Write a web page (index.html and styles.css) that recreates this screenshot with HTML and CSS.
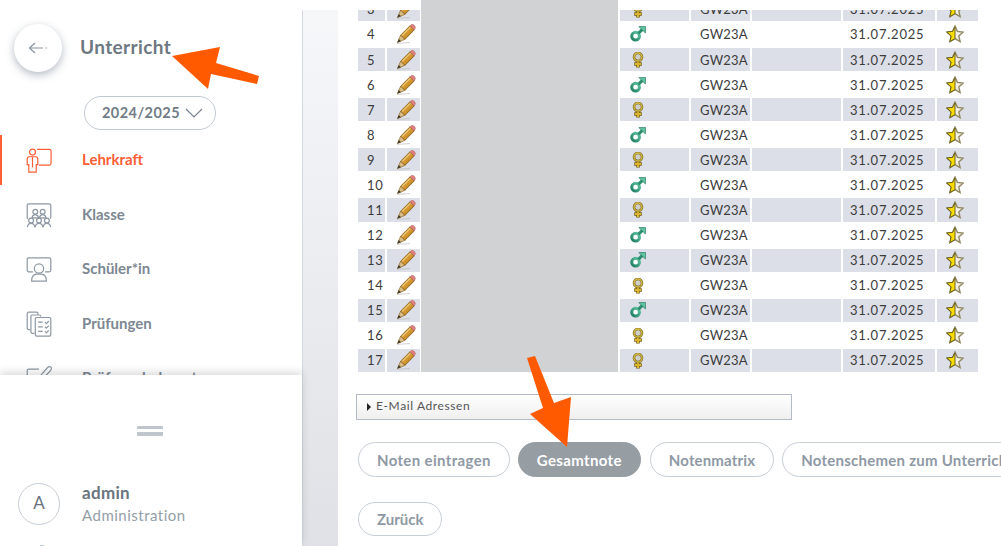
FILE: index.html
```html
<!DOCTYPE html>
<html lang="de">
<head>
    <meta charset="UTF-8">
    <title>Unterricht</title>
    <link rel="stylesheet" href="styles.css">
</head>
<body>
    <svg class="defs" width="0" height="0">
        <defs>
            <linearGradient id="g-pencil" x1="0" y1="0" x2="1" y2="1">
                <stop offset="0" stop-color="#f0c465"/>
                <stop offset=".55" stop-color="#d2952c"/>
                <stop offset="1" stop-color="#8f6318"/>
            </linearGradient>
            <linearGradient id="g-male" x1="1" y1="0" x2="0" y2="1">
                <stop offset="0" stop-color="#63c9a4"/>
                <stop offset="1" stop-color="#1d7a60"/>
            </linearGradient>
        </defs>
        <symbol id="i-pencil" viewBox="0 0 20 20">
            <path d="M1 19.3 L14 18.6" stroke="#b5b5b5" stroke-width="1" opacity=".6"/>
            <path d="M4.6 11.2 L14 1.8 L18.2 6 L8.8 15.4 Z" fill="url(#g-pencil)" stroke="#7d5715" stroke-width=".8"/>
            <path d="M6.2 11.4 L14.6 3" stroke="#f8dd98" stroke-width="1"/>
            <path d="M14 1.8 L15.4 .6 Q16.6 0 17.6 .8 L19 2.2 Q19.8 3.4 19 4.6 L18.2 6 Z" fill="#e2807e" stroke="#a85f5c" stroke-width=".5"/>
            <path d="M4.6 11.2 L8.8 15.4 L1.4 18.6 Z" fill="#d9bd85" stroke="#7d5715" stroke-width=".6"/>
            <path d="M2.8 15 L5 17.2 L1.4 18.6 Z" fill="#3c3628"/>
        </symbol>
        <symbol id="i-male" viewBox="0 0 16 16">
            <circle cx="5.6" cy="10.2" r="3.9" fill="#fff" stroke="url(#g-male)" stroke-width="3"/>
            <path d="M8.4 7.4 L12.4 3.4" stroke="#2c8d70" stroke-width="3"/>
            <path d="M8.8 .6 L15.6 .4 L15.4 7 Z" fill="#5ec4a0" stroke="#1f6b55" stroke-width=".6"/>
        </symbol>
        <symbol id="i-female" viewBox="0 0 12 16">
            <path d="M6 8 V15.4 M2.2 12 H9.8" stroke="#6f5d16" stroke-width="3.6"/>
            <path d="M6 8 V15 M2.8 12 H9.2" stroke="#dcb52c" stroke-width="2.2"/>
            <circle cx="6" cy="5" r="4" fill="#cfcfc6" stroke="#7c6c22" stroke-width="2.6"/>
            <circle cx="6" cy="5" r="4" fill="none" stroke="#d9bb45" stroke-width="1.3"/>
        </symbol>
        <symbol id="i-star" viewBox="0 0 18 18">
            <path d="M9 1 L11.4 6.4 L17.2 7 L12.8 10.9 L14.1 16.6 L9 13.6 L3.9 16.6 L5.2 10.9 L.8 7 L6.6 6.4 Z" fill="#f1efe6" stroke="#928862" stroke-width="1.4"/>
            <path d="M9 2 V13.6 L3.9 16.6 L5.2 10.9 L.8 7 L6.6 6.4 Z" fill="#fbdc00" stroke="#5f571a" stroke-width=".9"/>
        </symbol>
    </svg>

    <aside class="sidebar">
        <div class="sidebar-scroll">
            <header class="sidebar-head">
                <button class="back-btn">
                    <svg width="20" height="12" viewBox="0 0 20 12"><path d="M7 1 L1.5 6 L7 11 M1.5 6 H15 M17.5 6 H19" fill="none" stroke="#8a94a0" stroke-width="1.2"/></svg>
                </button>
                <h1>Unterricht</h1>
            </header>
            <div class="year-select">
                <span>2024/2025</span>
                <svg width="18" height="10" viewBox="0 0 18 10"><path d="M1 1 L9 9 L17 1" fill="none" stroke="#7d8792" stroke-width="1.2"/></svg>
            </div>
            <nav class="nav">
                <a class="nav-item active">
                    <svg class="nav-icon" viewBox="0 0 28 28">
                        <circle cx="7" cy="5.5" r="3.2"/>
                        <path d="M3.5 10.5 H10.5 Q12.7 10.5 12.7 13 V19 H11 V27 H3 V19 H1.3 V13 Q1.3 10.5 3.5 10.5 Z M7 10.5 V22"/>
                        <path d="M12 2.5 H25 Q27 2.5 27 4.5 V17.5 Q27 19.5 25 19.5 H14"/>
                    </svg>
                    <span>Lehrkraft</span>
                </a>
                <a class="nav-item">
                    <svg class="nav-icon" viewBox="0 0 28 28">
                        <path d="M2 18 Q1.3 18 1.3 16 V3.5 Q1.3 2 3 2 H25 Q26.7 2 26.7 3.5 V16 Q26.7 18 26 18"/>
                        <circle cx="10" cy="10.5" r="2.6"/><circle cx="18" cy="10.5" r="2.6"/>
                        <path d="M6.5 17 Q7 13.6 10 13.6 T13.5 17 H6.5 Z M14.5 17 Q15 13.6 18 13.6 T21.5 17 H14.5 Z"/>
                        <circle cx="5.5" cy="20" r="2.6"/><circle cx="14" cy="20" r="2.6"/><circle cx="22.5" cy="20" r="2.6"/>
                        <path d="M1.5 27 Q2 23 5.5 23 T9.5 27 M10 27 Q10.5 23 14 23 T18 27 M18.5 27 Q19 23 22.5 23 T26.5 27"/>
                    </svg>
                    <span>Klasse</span>
                </a>
                <a class="nav-item">
                    <svg class="nav-icon" viewBox="0 0 28 28">
                        <path d="M7.5 17 H3 Q1.3 17 1.3 15 V3.5 Q1.3 2 3 2 H25 Q26.7 2 26.7 3.5 V15 Q26.7 17 25 17 H20.5"/>
                        <circle cx="14" cy="13.5" r="5"/>
                        <path d="M6 27 Q6 20.5 11 19.5 H17 Q22 20.5 22 27 Z"/>
                    </svg>
                    <span>Schüler*in</span>
                </a>
                <a class="nav-item">
                    <svg class="nav-icon" viewBox="0 0 28 28">
                        <path d="M4.5 20 H3 Q1.3 20 1.3 18 V3 Q1.3 1.3 3 1.3 H11 Q13 1.3 13 3 V4"/>
                        <path d="M9 24 H7 Q5.3 24 5.3 22 V6 Q5.3 4.3 7 4.3 H14 Q16 4.3 16 6"/>
                        <rect x="10" y="7" width="16.7" height="20" rx="1.5"/>
                        <path d="M13 12 H18 M13 17 H18 M13 22 H18 M20.5 12 L22 13.5 L24.5 10.8 M20.5 17 L22 18.5 L24.5 15.8 M20.5 22 L22 23.5 L24.5 20.8"/>
                    </svg>
                    <span>Prüfungen</span>
                </a>
                <a class="nav-item">
                    <svg class="nav-icon" viewBox="0 0 28 28">
                        <path d="M14 4.5 H3 Q1.3 4.5 1.3 6 V25 Q1.3 27 3 27 H22 Q24 27 24 25 V14"/>
                        <path d="M10 18 L23 3 Q25 1 27 2.5 Q28 4.5 26 6.5 L13 20 Z"/>
                    </svg>
                    <span>Prüfungsbelegart</span>
                </a>
            </nav>
        </div>
        <div class="user-panel">
            <div class="handle"></div>
            <div class="user">
                <div class="avatar">A</div>
                <div>
                    <div class="user-name">admin</div>
                    <div class="user-role">Administration</div>
                </div>
            </div>
            <div class="logout-mark"></div>
        </div>
    </aside>

    <div class="strip"></div>

    <main class="content">
        <table class="students">
            <colgroup>
                <col class="c-nr"><col class="c-edit"><col class="c-name"><col class="c-sex"><col class="c-class"><col class="c-empty"><col class="c-date"><col class="c-star">
            </colgroup>
            <tbody>
                <tr class="alt"><td>3</td><td><svg class="pencil"><use href="#i-pencil"/></svg></td><td></td><td><svg class="female"><use href="#i-female"/></svg></td><td>GW23A</td><td></td><td>31.07.2025</td><td><svg class="star"><use href="#i-star"/></svg></td></tr>
                <tr><td>4</td><td><svg class="pencil"><use href="#i-pencil"/></svg></td><td></td><td><svg class="male"><use href="#i-male"/></svg></td><td>GW23A</td><td></td><td>31.07.2025</td><td><svg class="star"><use href="#i-star"/></svg></td></tr>
                <tr class="alt"><td>5</td><td><svg class="pencil"><use href="#i-pencil"/></svg></td><td></td><td><svg class="female"><use href="#i-female"/></svg></td><td>GW23A</td><td></td><td>31.07.2025</td><td><svg class="star"><use href="#i-star"/></svg></td></tr>
                <tr><td>6</td><td><svg class="pencil"><use href="#i-pencil"/></svg></td><td></td><td><svg class="male"><use href="#i-male"/></svg></td><td>GW23A</td><td></td><td>31.07.2025</td><td><svg class="star"><use href="#i-star"/></svg></td></tr>
                <tr class="alt"><td>7</td><td><svg class="pencil"><use href="#i-pencil"/></svg></td><td></td><td><svg class="female"><use href="#i-female"/></svg></td><td>GW23A</td><td></td><td>31.07.2025</td><td><svg class="star"><use href="#i-star"/></svg></td></tr>
                <tr><td>8</td><td><svg class="pencil"><use href="#i-pencil"/></svg></td><td></td><td><svg class="male"><use href="#i-male"/></svg></td><td>GW23A</td><td></td><td>31.07.2025</td><td><svg class="star"><use href="#i-star"/></svg></td></tr>
                <tr class="alt"><td>9</td><td><svg class="pencil"><use href="#i-pencil"/></svg></td><td></td><td><svg class="female"><use href="#i-female"/></svg></td><td>GW23A</td><td></td><td>31.07.2025</td><td><svg class="star"><use href="#i-star"/></svg></td></tr>
                <tr><td>10</td><td><svg class="pencil"><use href="#i-pencil"/></svg></td><td></td><td><svg class="male"><use href="#i-male"/></svg></td><td>GW23A</td><td></td><td>31.07.2025</td><td><svg class="star"><use href="#i-star"/></svg></td></tr>
                <tr class="alt"><td>11</td><td><svg class="pencil"><use href="#i-pencil"/></svg></td><td></td><td><svg class="female"><use href="#i-female"/></svg></td><td>GW23A</td><td></td><td>31.07.2025</td><td><svg class="star"><use href="#i-star"/></svg></td></tr>
                <tr><td>12</td><td><svg class="pencil"><use href="#i-pencil"/></svg></td><td></td><td><svg class="male"><use href="#i-male"/></svg></td><td>GW23A</td><td></td><td>31.07.2025</td><td><svg class="star"><use href="#i-star"/></svg></td></tr>
                <tr class="alt"><td>13</td><td><svg class="pencil"><use href="#i-pencil"/></svg></td><td></td><td><svg class="male"><use href="#i-male"/></svg></td><td>GW23A</td><td></td><td>31.07.2025</td><td><svg class="star"><use href="#i-star"/></svg></td></tr>
                <tr><td>14</td><td><svg class="pencil"><use href="#i-pencil"/></svg></td><td></td><td><svg class="female"><use href="#i-female"/></svg></td><td>GW23A</td><td></td><td>31.07.2025</td><td><svg class="star"><use href="#i-star"/></svg></td></tr>
                <tr class="alt"><td>15</td><td><svg class="pencil"><use href="#i-pencil"/></svg></td><td></td><td><svg class="male"><use href="#i-male"/></svg></td><td>GW23A</td><td></td><td>31.07.2025</td><td><svg class="star"><use href="#i-star"/></svg></td></tr>
                <tr><td>16</td><td><svg class="pencil"><use href="#i-pencil"/></svg></td><td></td><td><svg class="female"><use href="#i-female"/></svg></td><td>GW23A</td><td></td><td>31.07.2025</td><td><svg class="star"><use href="#i-star"/></svg></td></tr>
                <tr class="alt"><td>17</td><td><svg class="pencil"><use href="#i-pencil"/></svg></td><td></td><td><svg class="female"><use href="#i-female"/></svg></td><td>GW23A</td><td></td><td>31.07.2025</td><td><svg class="star"><use href="#i-star"/></svg></td></tr>
            </tbody>
        </table>

        <div class="mail-box"><span class="tri"></span><span class="mail-label">E-Mail Adressen</span></div>

        <div class="btn-row">
            <a class="btn">Noten eintragen</a>
            <a class="btn btn-active">Gesamtnote</a>
            <a class="btn btn-matrix">Notenmatrix</a>
            <a class="btn btn-wide">Notenschemen zum Unterricht</a>
        </div>
        <div class="btn-row btn-row-back">
            <a class="btn btn-back">Zurück</a>
        </div>
    </main>

    <!-- geschwaerzte Namen und die Pfeile liegen ueber dem Screenshot -->
    <div class="redact"></div>
    <svg class="arrows" width="1001" height="546" viewBox="0 0 1001 546">
        <polygon points="172,56 220,47 216,63 259,76 257,84 211,74 208,89"/>
        <polygon points="527,358 535,356 554,403 571,397 567,447 530,414 543,408"/>
    </svg>
</body>
</html>
```

FILE: styles.css
```css
/* Allgemein */
html, body {
    height: 100%;
}

body {
    margin: 0;
    display: flex;
    height: 546px;
    overflow: hidden;
    background: #fff;
    font-family: Lato, "Open Sans", sans-serif;
    color: #333;
}

.defs {
    position: absolute;
}

/* Seitenleiste */
.sidebar {
    width: 302px;
    flex: none;
    display: flex;
    flex-direction: column;
    height: 546px;
    background: #fff;
}

.sidebar-scroll {
    height: 375px;
    flex: none;
    overflow: hidden;
}

.sidebar-head {
    display: flex;
    align-items: center;
    padding: 24px 0 0 14px;
}

.sidebar-head h1 {
    margin: 0 0 4px 18px;
    font-size: 19px;
    font-weight: 700;
    letter-spacing: .4px;
    color: #6d7882;
}

.back-btn {
    width: 48px;
    height: 48px;
    padding: 0;
    border: none;
    border-radius: 50%;
    background: #fff;
    box-shadow: 0 3px 8px rgba(90, 105, 125, .45);
    display: flex;
    align-items: center;
    justify-content: center;
}

.year-select {
    display: flex;
    align-items: center;
    justify-content: center;
    gap: 5px;
    box-sizing: border-box;
    width: 132px;
    height: 34px;
    margin: 24px 0 0 84px;
    padding-left: 5px;
    border: 1px solid #c3cad3;
    border-radius: 17px;
    font-size: 14.5px;
    font-weight: 700;
    letter-spacing: .45px;
    color: #717c86;
}

.year-select span {
    margin-bottom: 2px;
}

.nav {
    margin-top: 5px;
}

.nav-item {
    display: flex;
    align-items: center;
    gap: 30px;
    box-sizing: border-box;
    height: 50px;
    margin-bottom: 4.5px;
    padding-left: 24px;
    border-left: 2px solid transparent;
    font-size: 15px;
    font-weight: 700;
    color: #7d8893;
}

.nav-item span {
    margin-bottom: 2px;
}

.nav-item.active {
    border-left-color: #ff5f36;
    color: #ff5f36;
}

.nav-icon {
    width: 26px;
    height: 28px;
    flex: none;
    fill: none;
    stroke: #8d98a3;
    stroke-width: 1.3;
}

.active .nav-icon {
    stroke: #ff5f36;
}

.user-panel {
    position: relative;
    flex: 1;
    background: #fff;
    box-shadow: 0 -3px 8px rgba(0, 0, 0, .14);
}

.handle {
    width: 26px;
    height: 3px;
    margin: 51px 0 0 137px;
    border-top: 3px solid #bfc6cd;
    border-bottom: 4px solid #bfc6cd;
    border-radius: 1px;
}

.user {
    display: flex;
    align-items: center;
    gap: 22px;
    margin: 46px 0 0 18px;
}

.avatar {
    width: 42px;
    height: 42px;
    box-sizing: border-box;
    border: 1px solid #c8ced6;
    border-radius: 50%;
    text-align: center;
    font-size: 17px;
    line-height: 38px;
    color: #67727d;
}

.user-name {
    font-size: 17px;
    font-weight: 700;
    letter-spacing: .3px;
    line-height: 22px;
    color: #69747e;
}

.user-role {
    font-size: 15px;
    letter-spacing: .5px;
    line-height: 22px;
    color: #949ea8;
}

.logout-mark {
    width: 4px;
    height: 1px;
    margin: 19px 0 0 40px;
    background: #c3cad3;
}

/* Grauer Streifen */
.strip {
    width: 36px;
    flex: none;
    box-sizing: border-box;
    margin-top: 10px;
    border-left: 1px solid #d5d9df;
    background: linear-gradient(#f6f7f9, #dfe1e6);
}

/* Inhalt */
.content {
    flex: 1;
    min-width: 0;
    margin-top: 10px;
    padding-left: 18px;
    overflow: hidden;
}

.students {
    table-layout: fixed;
    width: 624px;
    margin-top: -14.2px;
    border-collapse: separate;
    border-spacing: 2px;
    font-size: 13px;
    letter-spacing: .8px;
    color: #3c3c3c;
}

.c-nr { width: 27px; }
.c-edit { width: 33px; }
.c-name { width: 196px; }
.c-sex { width: 69px; }
.c-class { width: 59px; }
.c-empty { width: 89px; }
.c-date { width: 92px; }
.c-star { width: 41px; }

.students td {
    height: 23.08px;
    padding: 0 0 0 9px;
    box-sizing: border-box;
}

.students td:nth-child(5) { letter-spacing: .2px; }
.students td:nth-child(7) { padding-left: 7px; }

.students .alt td {
    background: #dcdfe7;
}

.students svg {
    display: block;
}

.pencil {
    width: 20px;
    height: 20px;
}

.male {
    width: 16px;
    height: 16px;
    margin-left: 1px;
}

.female {
    width: 12px;
    height: 16px;
    margin: 1px 0 0 3px;
}

.star {
    width: 18px;
    height: 18px;
}

.mail-box {
    display: flex;
    align-items: center;
    box-sizing: border-box;
    width: 436px;
    height: 26px;
    margin: 20px 0 0 0;
    border: 1px solid #b4bac6;
    background: linear-gradient(#fff, #efefef);
    padding-left: 10px;
    font-size: 12px;
    letter-spacing: .6px;
    color: #555;
}

.mail-label {
    margin-bottom: 2px;
}

.tri {
    width: 0;
    height: 0;
    margin-right: 5px;
    border-left: 4px solid #222;
    border-top: 4px solid transparent;
    border-bottom: 4px solid transparent;
}

.btn-row {
    display: flex;
    gap: 8px;
    margin: 22px 0 0 2px;
    width: 800px;
}

.btn-row-back {
    margin-top: 25px;
}

.btn {
    display: block;
    flex: none;
    box-sizing: border-box;
    height: 35px;
    padding: 0 18px;
    border: 1px solid #c8ced6;
    border-radius: 18px;
    font-size: 15px;
    font-weight: 700;
    line-height: 35px;
    letter-spacing: .35px;
    color: #8f99a5;
}

.btn-active {
    background: #969da3;
    border-color: #969da3;
    color: #fff;
}

.btn-matrix {
    margin-left: 1px;
    letter-spacing: .15px;
}

.btn-wide {
    letter-spacing: .25px;
}

.btn-back {
    height: 34px;
    padding-right: 17px;
    line-height: 33px;
    letter-spacing: 0;
}

/* Ueberlagerungen */
.redact {
    position: absolute;
    left: 421px;
    top: 0;
    width: 197px;
    height: 372px;
    background: #d1d2d4;
}

.arrows {
    position: absolute;
    left: 0;
    top: 0;
    fill: #ff5a00;
}
```
